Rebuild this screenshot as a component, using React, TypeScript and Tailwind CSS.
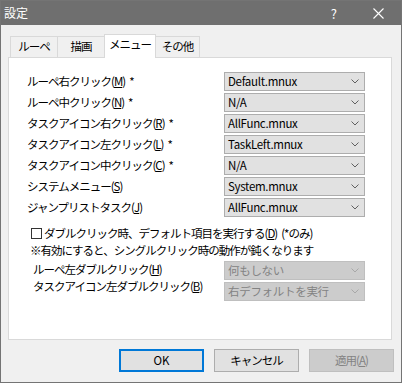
import React from 'react';

const rows = [
  { label: 'ルーペ右クリック', key: 'M', star: true, value: 'Default.mnux' },
  { label: 'ルーペ中クリック', key: 'N', star: true, value: 'N/A' },
  { label: 'タスクアイコン右クリック', key: 'R', star: true, value: 'AllFunc.mnux' },
  { label: 'タスクアイコン左クリック', key: 'L', star: true, value: 'TaskLeft.mnux' },
  { label: 'タスクアイコン中クリック', key: 'C', star: true, value: 'N/A' },
  { label: 'システムメニュー', key: 'S', star: false, value: 'System.mnux' },
  { label: 'ジャンプリストタスク', key: 'J', star: false, value: 'AllFunc.mnux' },
];

function Chevron({ disabled }: { disabled?: boolean }) {
  return (
    <svg width="8" height="5" viewBox="0 0 8 5" className="shrink-0">
      <polyline
        points="0.5,0.5 4,4 7.5,0.5"
        fill="none"
        stroke={disabled ? '#a8a8a8' : '#606060'}
        strokeWidth="1"
      />
    </svg>
  );
}

function Combo({ value, disabled }: { value: string; disabled?: boolean }) {
  return (
    <div
      className={
        disabled
          ? 'w-[141px] h-[19px] shrink-0 border border-[#bfbfbf] bg-[#cccccc] text-[#838383] flex items-center justify-between pl-[3px] pr-[5px]'
          : 'w-[141px] h-[19px] shrink-0 border border-[#adadad] bg-[#e1e1e1] text-black flex items-center justify-between pl-[3px] pr-[5px]'
      }
    >
      <span className="leading-none whitespace-nowrap tracking-[-0.3px]">{value}</span>
      <Chevron disabled={disabled} />
    </div>
  );
}

function Key({ k }: { k: string }) {
  return (
    <>
      (<span className="underline underline-offset-[1px]">{k}</span>)
    </>
  );
}

export default function App() {
  return (
    <div className="w-[402px] h-[383px] border border-[#747474] bg-[#f0f0f0] flex flex-col text-[11.5px] tracking-[-1px] text-black font-['Noto_Sans_CJK_JP','Noto_Sans',sans-serif] overflow-hidden whitespace-nowrap">
      {/* Title bar */}
      <div className="h-[24px] shrink-0 bg-[#6f6f6f] flex items-center text-white">
        <span className="pl-[3px] leading-none text-[12px] tracking-normal">設定</span>
        <span className="ml-auto mr-[37px] text-[13px] leading-none">?</span>
        <svg width="11" height="11" viewBox="0 0 11 11" className="mr-[17px]">
          <path d="M0.5 0.5 L10.5 10.5 M10.5 0.5 L0.5 10.5" stroke="#ffffff" strokeWidth="1.1" />
        </svg>
      </div>

      {/* Tabs */}
      <div className="mt-[9px] ml-[9px] h-[23px] flex items-end shrink-0">
        <div className="w-[47px] h-[21px] border-l border-t border-[#d9d9d9] bg-[#f0f0f0] flex items-center justify-center leading-none">ルーペ</div>
        <div className="w-[47px] h-[21px] border-l border-t border-[#d9d9d9] bg-[#f0f0f0] flex items-center justify-center leading-none">描画</div>
        <div className="relative z-10 w-[52px] h-[24px] -mb-px border-l border-t border-r border-[#d9d9d9] bg-white flex items-start justify-center pt-[4px] leading-none">メニュー</div>
        <div className="w-[44px] h-[21px] border-t border-r border-[#d9d9d9] bg-[#f0f0f0] flex items-center justify-center leading-none">その他</div>
      </div>

      {/* Panel */}
      <div className="ml-[7px] w-[384px] h-[283px] shrink-0 border border-[#d9d9d9] bg-white pt-[14px] pl-[18px] flex flex-col">
        {rows.map((r) => (
          <div key={r.key} className="h-[21px] flex items-start">
            <div className="w-[197px] h-[19px] flex items-center leading-none">
              {r.label}
              <Key k={r.key} />
              {r.star ? <span className="ml-[4px]">*</span> : null}
            </div>
            <Combo value={r.value} />
          </div>
        ))}

        <div className="mt-[6px] h-[17px] flex items-center">
          <div className="ml-[4px] w-[11px] h-[11px] border border-[#333333] bg-white shrink-0" />
          <span className="ml-[2px] leading-none">
            ダブルクリック時、デフォルト項目を実行する<Key k="D" />
            <span className="ml-[4px]">(*のみ)</span>
          </span>
        </div>
        <div className="h-[17px] flex items-center pl-[3px] leading-none">
          ※有効にすると、シングルクリック時の動作が鈍くなります
        </div>

        <div className="mt-[2px] flex">
          <div className="w-[197px] flex flex-col pl-[6px]">
            <div className="h-[17px] flex items-center leading-none">
              ルーペ左ダブルクリック<Key k="H" />
            </div>
            <div className="h-[17px] flex items-center leading-none">
              タスクアイコン左ダブルクリック<Key k="B" />
            </div>
          </div>
          <div className="flex flex-col gap-[2px]">
            <Combo value="何もしない" disabled />
            <Combo value="右デフォルトを実行" disabled />
          </div>
        </div>
      </div>

      {/* Buttons */}
      <div className="mt-[9px] flex justify-end gap-[10px] pr-[7px]">
        <div className="w-[85px] h-[23px] border-2 border-[#0078d7] bg-[#e1e1e1] flex items-center justify-center leading-none tracking-normal">OK</div>
        <div className="w-[85px] h-[23px] border border-[#adadad] bg-[#e1e1e1] flex items-center justify-center leading-none">キャンセル</div>
        <div className="w-[85px] h-[23px] border border-[#bfbfbf] bg-[#cccccc] text-[#838383] flex items-center justify-center leading-none">
          適用<Key k="A" />
        </div>
      </div>
    </div>
  );
}
